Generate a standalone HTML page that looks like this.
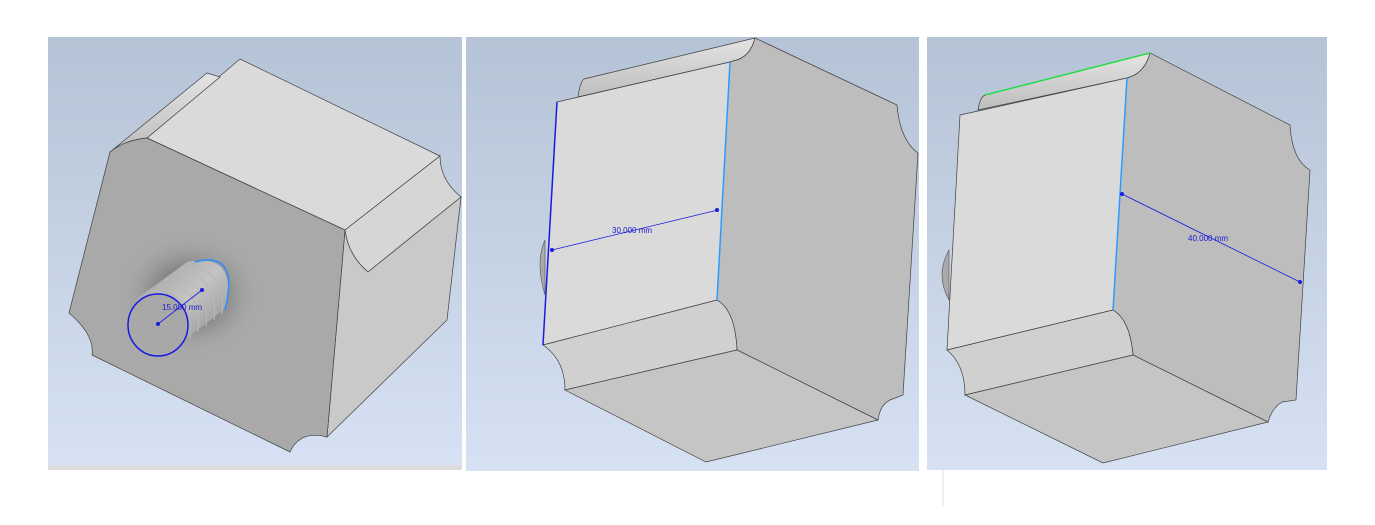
<!DOCTYPE html>
<html><head><style>
html,body{margin:0;padding:0;background:#fff;width:1375px;height:525px;overflow:hidden}
svg{position:absolute;left:0;top:0}
text{font-family:"Liberation Sans",sans-serif;font-size:8px;fill:#1a1ad0}
</style></head><body>
<svg width="1375" height="525" viewBox="0 0 1375 525">
<defs>
<linearGradient id="bg" x1="0" y1="0" x2="0" y2="1">
<stop offset="0" stop-color="#b5c3d6"/><stop offset="1" stop-color="#d6e2f3"/>
</linearGradient>
<radialGradient id="sh" cx="0.5" cy="0.5" r="0.5">
<stop offset="0" stop-color="#4a4a4a"/><stop offset="0.45" stop-color="#858585"/><stop offset="1" stop-color="#a9a9a9" stop-opacity="0"/>
</radialGradient>
<linearGradient id="thr" x1="0" y1="0" x2="1" y2="1">
<stop offset="0" stop-color="#9a9a9a"/><stop offset="0.5" stop-color="#c4c4c4"/><stop offset="1" stop-color="#8a8a8a"/>
</linearGradient>
<linearGradient id="gr" x1="0" y1="0" x2="0" y2="1">
<stop offset="0" stop-color="#e4e4e4"/><stop offset="1" stop-color="#bdbdbd"/>
</linearGradient>
</defs>
<!-- panel 1 -->
<rect x="48" y="37" width="414" height="428" fill="url(#bg)"/>
<rect x="48" y="465" width="414" height="5" fill="#dcdcdc"/>
<g stroke="#404040" stroke-width="0.7">
<path d="M147,138 L240,59 L440,156 L345,230 Z" fill="#dadada"/>
<path d="M110,152 L207,73 L220,77 L147,138 Q125,140 110,152Z" fill="url(#gr)"/>
<path d="M440,156 Q440,180 461,197 L368,272 Q348,255 345,230 Z" fill="#d6d6d6"/>
<path d="M368,272 L461,197 L447,320 L327,437 L345,230 Q348,255 368,272Z" fill="#c9c9c9"/>
<path d="M110,152 Q125,140 147,138 L345,230 L327,437 Q300,430 290,452 L92,355 Q95,335 69,313 Z" fill="#a9a9a9"/>
</g>
<ellipse cx="190" cy="295" rx="72" ry="62" fill="url(#sh)"/>
<path d="M135,300 L187,262 Q238,252 226,308 L178,345 Z" fill="url(#thr)"/>
<g stroke="#b8b8b8" stroke-width="1.2" fill="none">
<path d="M150,292 Q195,290 190,338"/><path d="M158,285 Q203,283 198,332"/><path d="M166,279 Q211,277 206,326"/><path d="M174,273 Q219,271 214,320"/><path d="M182,267 Q227,265 222,314"/>
</g>
<ellipse cx="158" cy="325" rx="30" ry="31" fill="#a8a8a8" stroke="#1a1ae0" stroke-width="1.5"/>
<path d="M195,262 Q240,250 225,310" fill="none" stroke="#2a8cff" stroke-width="1.5"/>
<line x1="158" y1="324" x2="202" y2="290" stroke="#1a1ae0" stroke-width="0.8"/>
<circle cx="158" cy="324" r="2" fill="#1a1ae0"/><circle cx="202" cy="290" r="2" fill="#1a1ae0"/>
<text x="162" y="310">15.000 mm</text>
<!-- panel 2 -->
<rect x="466" y="37" width="453" height="434" fill="url(#bg)"/>
<g stroke="#404040" stroke-width="0.7">
<path d="M578,97 Q580,82 584,79 L755,38 Q750,58 733,61 L730,62 Z" fill="url(#gr)"/>
<path d="M730,62 L733,61 Q750,58 755,38 L897,105 Q900,140 918,153 L903,395 L890,400 Q880,405 878,420 L737,350 Q735,310 717,300 Z" fill="#bdbdbd"/>
<path d="M557,102 L730,62 L717,300 L543,345 Z" fill="#dadada"/>
<path d="M543,345 L717,300 Q735,310 737,350 L565,390 Q565,360 543,345Z" fill="#d0d0d0"/>
<path d="M565,390 L737,350 L878,420 L706,462 Z" fill="#c5c5c5"/>
</g>
<path d="M545,240 Q535,262 545,295 Z" fill="#aaa" stroke="#555" stroke-width="0.6"/>
<line x1="557" y1="102" x2="543" y2="345" stroke="#1a1ae0" stroke-width="1.5"/>
<line x1="730" y1="62" x2="717" y2="300" stroke="#2a9cff" stroke-width="1.5"/>
<line x1="552" y1="250" x2="718" y2="210" stroke="#1a1ae0" stroke-width="0.8"/>
<circle cx="552" cy="250" r="2" fill="#1a1ae0"/><circle cx="717" cy="210" r="2" fill="#1a1ae0"/>
<text x="612" y="233">30.000 mm</text>
<!-- panel 3 -->
<rect x="927" y="37" width="400" height="433" fill="url(#bg)"/>
<line x1="943" y1="470" x2="943" y2="506" stroke="#e0e0e0"/>
<g stroke="#404040" stroke-width="0.7">
<path d="M978,110 Q980,97 985,95 L1150,53 Q1145,72 1130,77 L1127,78 Z" fill="url(#gr)"/>
<path d="M1127,78 L1130,77 Q1145,72 1150,53 L1290,125 Q1292,160 1310,170 L1296,400 L1282,402 Q1272,408 1268,422 L1133,355 Q1130,320 1113,310 Z" fill="#bdbdbd"/>
<path d="M960,115 L1127,78 L1113,310 L947,350 Z" fill="#dadada"/>
<path d="M947,350 L1113,310 Q1130,320 1133,355 L965,395 Q965,365 947,350Z" fill="#d0d0d0"/>
<path d="M965,395 L1133,355 L1268,422 L1103,463 Z" fill="#c5c5c5"/>
</g>
<path d="M949,250 Q935,275 949,300 Z" fill="#aaa" stroke="#555" stroke-width="0.6"/>
<line x1="985" y1="95" x2="1150" y2="53" stroke="#22dd44" stroke-width="1.5"/>
<line x1="1127" y1="78" x2="1113" y2="310" stroke="#2a9cff" stroke-width="1.5"/>
<line x1="1122" y1="194" x2="1300" y2="282" stroke="#1a1ae0" stroke-width="0.8"/>
<circle cx="1122" cy="194" r="2" fill="#1a1ae0"/><circle cx="1300" cy="282" r="2" fill="#1a1ae0"/>
<text x="1188" y="241">40.000 mm</text>
</svg>
</body></html>
